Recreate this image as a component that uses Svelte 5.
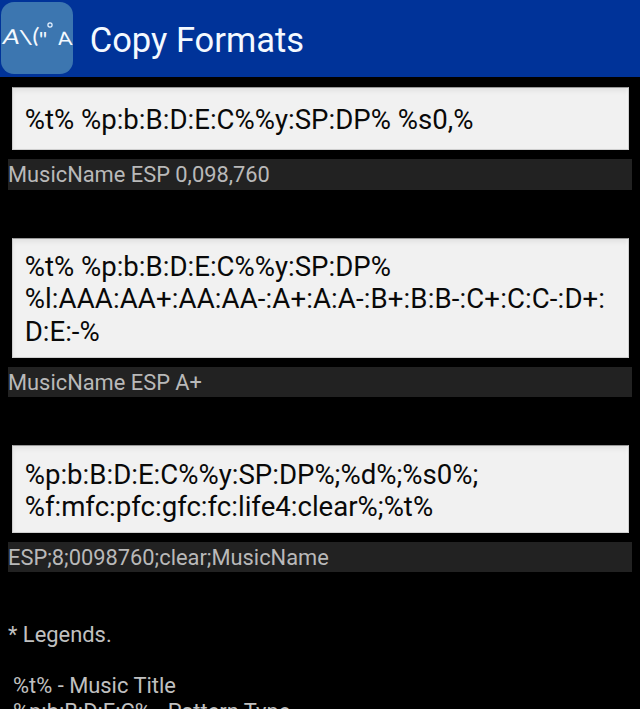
<script>
  const formats = [
    { lines: [{ text: '%t% %p:b:B:D:E:C%%y:SP:DP% %s0,%' }], preview: 'MusicName ESP 0,098,760' },
    {
      lines: [
        { text: '%t% %p:b:B:D:E:C%%y:SP:DP%' },
        { text: '%l:AAA:AA+:AA:AA-:A+:A:A-:B+:B:B-:C+:C:C-:D+:', grades: true },
        { text: 'D:E:-%' }
      ],
      preview: 'MusicName ESP A+'
    },
    {
      lines: [{ text: '%p:b:B:D:E:C%%y:SP:DP%;%d%;%s0%;' }, { text: '%f:mfc:pfc:gfc:fc:life4:clear%;%t%' }],
      preview: 'ESP;8;0098760;clear;MusicName'
    }
  ];
  const legends = ['%t% - Music Title', '%p:b:B:D:E:C% - Pattern Type'];
</script>

<div class="screen">
  <header>
    <svg class="logo" viewBox="0 0 72 72" aria-hidden="true">
      <rect width="72" height="72" rx="13" fill="#3c76b0" />
      <g fill="#f4f9ff" font-family="Lato, sans-serif">
        <text transform="translate(.8 42.3) skewX(-10) scale(1.22 1)" font-size="20.5">A</text>
        <text transform="translate(17.6 42) scale(1.7 1)" font-size="19">\</text>
        <text transform="translate(31 40.8) skewX(-4) scale(1.15 1)" font-size="21">(</text>
        <text transform="translate(37.8 44.5) scale(1.05 1)" font-size="22">"</text>
        <text transform="translate(57.3 43.2) skewX(6) scale(1.15 1)" font-size="18.5">A</text>
      </g>
      <circle cx="49" cy="23" r="2.1" fill="none" stroke="#e4f1ff" stroke-width="1.2" />
    </svg>
    <h1>Copy Formats</h1>
  </header>
  <main>
    {#each formats as format}
      <section>
        <div class="field rows-{format.lines.length}">
          {#each format.lines as line}<div class="line" class:grades={line.grades}>{line.text}</div>{/each}
        </div>
        <div class="preview">{format.preview}</div>
      </section>
    {/each}
    <div class="legend">
      <h2>* Legends.</h2>
      {#each legends as item}<p>{item}</p>{/each}
    </div>
  </main>
</div>

<style>
  :global(body) { margin: 0; background: #000; }
  .screen {
    width: 640px;
    height: 709px;
    overflow: hidden;
    background: #000;
    font-family: Roboto, sans-serif;
  }
  header {
    display: flex;
    align-items: center;
    height: 77px;
    background: #003399;
  }
  .logo { display: block; width: 72px; height: 72px; margin: 0 0 1px 1.2px; }
  h1 {
    margin: 2px 0 0 16.5px;
    color: #f4f9ff;
    font-size: 34.5px;
    font-weight: 400;
    line-height: 40px;
    white-space: nowrap;
  }
  main { padding: 10px 8px 0; }
  section { margin-bottom: 48px; }
  .field {
    box-sizing: border-box;
    height: 120px;
    margin: 0 3.5px;
    padding: 12.5px 12.2px 0;
    background: #f1f1f1;
    border: 1px solid #cfcfcf;
    border-top-color: #999;
    box-shadow: inset 0 3px 5px #00000010, inset -3px 0 2px -1px #ffffff90;
    color: #090909;
    font-size: 27.6px;
    line-height: 32.4px;
    white-space: nowrap;
  }
  .rows-1 { height: 63px; padding-top: 15.5px; }
  .rows-2 { height: 87.5px; padding-top: 12.7px; }
  .grades { letter-spacing: .11px; }
  .preview {
    height: 30.5px;
    margin-top: 9px;
    background: #222;
    color: #b9b9b9;
    font-size: 21.85px;
    line-height: 32.2px;
    white-space: nowrap;
  }
  .legend {
    padding-top: 2px;
    color: #c0c0c0;
    font-size: 21.9px;
    line-height: 25.6px;
    white-space: nowrap;
  }
  h2 { margin: 0 0 25.6px; font: inherit; }
  p { margin: 0; padding-left: 5px; }
</style>
